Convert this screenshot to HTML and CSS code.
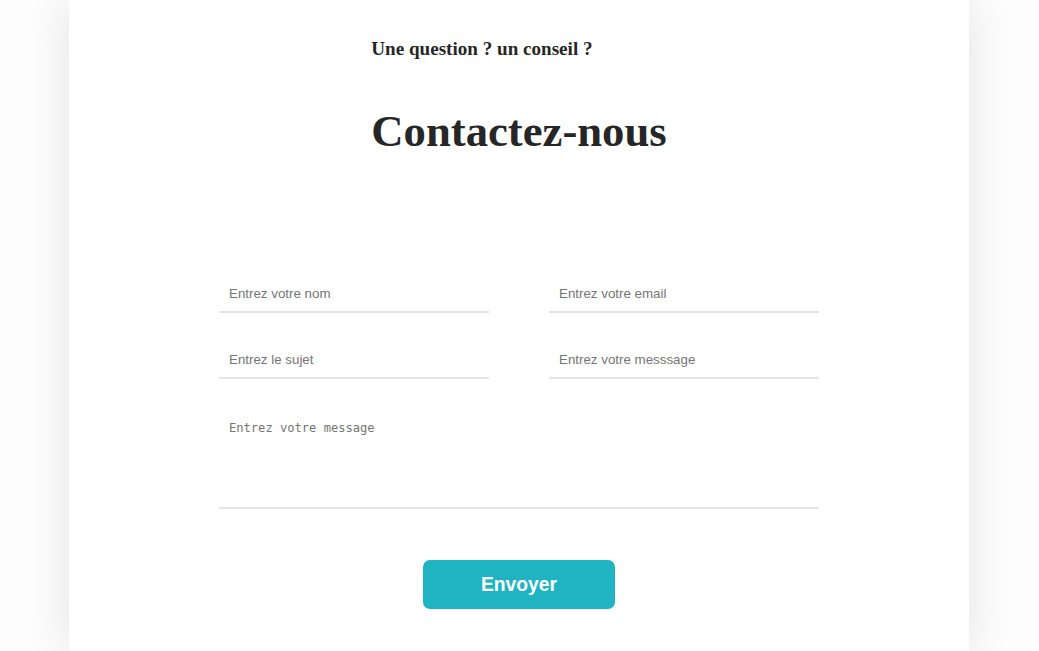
FILE: index.html
```html
<!DOCTYPE html>
<html lang="fr">
<head>
<meta charset="utf-8">
<title>Contactez-nous</title>
<link rel="stylesheet" href="styles.css">
</head>
<body>
<main class="card">
  <header class="hero">
    <div class="hero-inner">
      <h3 class="subtitle">Une question ? un conseil ?</h3>
      <h1 class="title">Contactez-nous</h1>
    </div>
  </header>
  <form class="contact-form">
    <div class="row">
      <input class="field" type="text" placeholder="Entrez votre nom">
      <input class="field" type="email" placeholder="Entrez votre email">
    </div>
    <div class="row">
      <input class="field" type="text" placeholder="Entrez le sujet">
      <input class="field" type="text" placeholder="Entrez votre messsage" autofocus>
    </div>
    <textarea class="area" placeholder="Entrez votre message"></textarea>
    <div class="actions">
      <button class="send" type="submit">Envoyer</button>
    </div>
  </form>
</main>
</body>
</html>
```
FILE: styles.css
```css
html, body {
  margin: 0;
  padding: 0;
}
body {
  background: #fdfdfd;
  font-family: "Liberation Serif", "Times New Roman", serif;
  color: #262626;
}
.card {
  width: 900px;
  margin: 0 calc(50% - 450.5px);
  min-height: 100vh;
  background: #fff;
  box-shadow: 0 0 45px rgba(0, 0, 0, 0.11);
  padding-top: 38px;
  box-sizing: border-box;
}
.hero {
  display: flex;
  justify-content: center;
}
.hero-inner {
  text-align: left;
}
.subtitle {
  margin: 0;
  font-size: 19.1px;
  font-weight: bold;
}
.title {
  margin: 45px 0 0;
  font-size: 44.7px;
  font-weight: bold;
}
.contact-form {
  width: 600px;
  margin: 116px auto 0;
  display: flex;
  flex-direction: column;
}
.row {
  display: flex;
  justify-content: space-between;
  margin-bottom: 26px;
}
.field {
  width: 270px;
  height: 40px;
  box-sizing: border-box;
  border: none;
  border-bottom: 2px solid #e4e4e8;
  padding: 2px 10px 0;
  font-family: "Liberation Sans", Arial, sans-serif;
  font-size: 13.333px;
  color: #333;
  background: transparent;
  outline: none;
  caret-color: #000;
}
.area {
  width: 600px;
  height: 104px;
  box-sizing: border-box;
  border: none;
  border-bottom: 2px solid #e4e4e8;
  padding: 16px 10px 12px;
  font-family: "DejaVu Sans Mono", "Liberation Mono", monospace;
  font-size: 12.1px;
  resize: none;
  outline: none;
  background: transparent;
}
.actions {
  display: flex;
  justify-content: center;
  margin-top: 51px;
}
.send {
  width: 192px;
  height: 49px;
  border: none;
  border-radius: 7px;
  background: #20b3c1;
  color: #fff;
  font-family: "Liberation Sans", Arial, sans-serif;
  font-weight: bold;
  font-size: 19.3px;
  cursor: pointer;
}
```
